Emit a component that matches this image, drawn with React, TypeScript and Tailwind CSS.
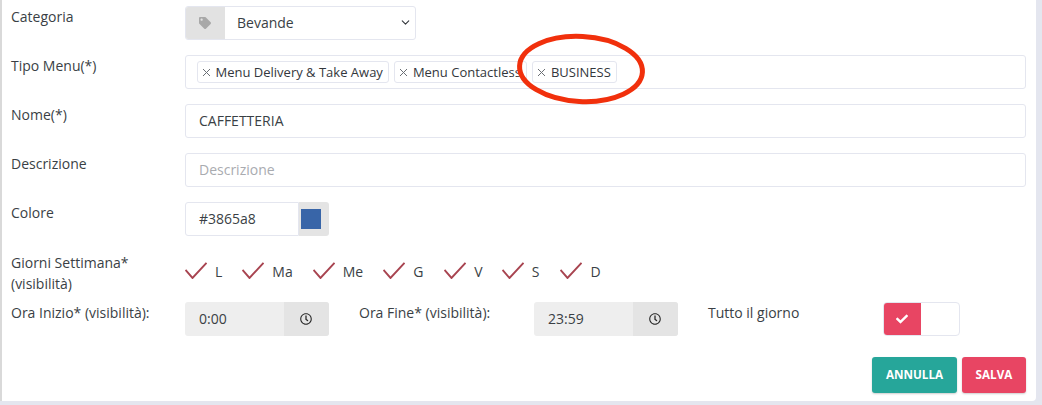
import { ChevronDown } from 'lucide-react';
import { FaCheck, FaRegClock, FaTag } from 'react-icons/fa';

const days = [
  { label: 'L', gap: 'mr-[20px]' },
  { label: 'Ma', gap: 'mr-[20px]' },
  { label: 'Me', gap: 'mr-[20px]' },
  { label: 'G', gap: 'mr-[21px]' },
  { label: 'V', gap: 'mr-[19px]' },
  { label: 'S', gap: 'mr-[21px]' },
  { label: 'D', gap: '' },
];

function Label({ children }: { children: React.ReactNode }) {
  return <div className="w-[174px] shrink-0 pt-px text-[14px] leading-5 text-[#3a3f45]">{children}</div>;
}

function Tag({ text }: { text: string }) {
  return (
    <span className="flex h-[22px] items-center gap-[4.5px] rounded-[3px] border border-[#e4e6ef] bg-white pl-[4px] pr-[5.5px] pt-px text-[13px] text-[#33373c]">
      <svg width="9" height="9" viewBox="0 0 9 9" stroke="#6b6f75" strokeWidth="1" fill="none">
        <path d="M1 1 L8 8 M8 1 L1 8" />
      </svg>
      {text}
    </span>
  );
}

function TimeBox({ value }: { value: string }) {
  return (
    <div className="flex h-[34px] w-[144px] shrink-0 overflow-hidden rounded-[3px] bg-[#eeeeee] text-[14px] text-[#3a3f45]">
      <div className="flex flex-1 items-center pb-px pl-[14px]">{value}</div>
      <div className="flex w-[45px] items-center justify-center bg-[#e4e4e4] pr-[2px]">
        <FaRegClock size={12} className="text-[#2b2b2b]" />
      </div>
    </div>
  );
}

export default function App() {
  return (
    <div className="h-[405px] w-[1042px] overflow-hidden bg-[#e4e6ef] font-['Open_Sans',sans-serif]">
      <div className="relative ml-[2px] h-[401px] w-[1034px] rounded-br-[4px] bg-white pl-[9px] pr-[10px] pt-[6px] shadow-[-2px_0_0_#d9d9d9]">
        <div className="mb-[15px] flex">
          <Label>Categoria</Label>
          <div className="flex h-[34px] w-[231px] overflow-hidden rounded-[3px] border border-[#e4e6ef]">
            <div className="-m-px flex w-[40px] items-center justify-center bg-[#e2e2e2]">
              <FaTag size={12} className="text-[#a8a8a8]" />
            </div>
            <div className="flex flex-1 items-center justify-between pb-px pl-[13px] pr-[3px] text-[14px] text-[#3a3f45]">
              Bevande
              <ChevronDown size={13} strokeWidth={2} className="text-[#33373c]" />
            </div>
          </div>
        </div>

        <div className="mb-[15px] flex">
          <Label>Tipo Menu(*)</Label>
          <div className="flex h-[34px] flex-1 items-center gap-[5px] rounded-[3px] border border-[#e4e6ef] pl-[11px]">
            <Tag text="Menu Delivery & Take Away" />
            <Tag text="Menu Contactless" />
            <Tag text="BUSINESS" />
          </div>
        </div>

        <div className="mb-[15px] flex">
          <Label>Nome(*)</Label>
          <div className="flex h-[34px] flex-1 items-center rounded-[3px] border border-[#e4e6ef] pb-px pl-[13px] text-[14px] text-[#3a3f45]">
            CAFFETTERIA
          </div>
        </div>

        <div className="mb-[15px] flex">
          <Label>Descrizione</Label>
          <div className="flex h-[34px] flex-1 items-center rounded-[3px] border border-[#e4e6ef] pb-px pl-[13px] text-[14px] text-[#a9abb0]">
            Descrizione
          </div>
        </div>

        <div className="mb-[15px] flex">
          <Label>Colore</Label>
          <div className="flex h-[34px] w-[144px]">
            <div className="flex w-[114px] items-center rounded-l-[3px] border border-[#e4e6ef] pb-px pl-[13px] text-[14px] text-[#3a3f45]">
              #3865a8
            </div>
            <div className="flex flex-1 items-center rounded-r-[3px] bg-[#e4e4e4] pl-[2px]">
              <div className="size-5 bg-[#3865a8]" />
            </div>
          </div>
        </div>

        <div className="mb-[9px] flex h-[42px]">
          <div className="w-[174px] shrink-0 pt-px text-[14px] leading-[21px] text-[#3a3f45]">
            Giorni Settimana*
            <br />
            (visibilità)
          </div>
          <div className="flex items-center pb-[2px] text-[14px] text-[#3a3f45]">
            {days.map((d) => (
              <div key={d.label} className={`flex items-center gap-[8px] ${d.gap}`}>
                <svg className="-mt-[2px]" width="22" height="17" viewBox="0 0 22 17" fill="none" stroke="#a84450" strokeWidth="1.9">
                  <path d="M0.5 8 L7.5 16 L21.5 0.8" />
                </svg>
                <span>{d.label}</span>
              </div>
            ))}
          </div>
        </div>

        <div className="mb-[21px] flex">
          <Label>Ora Inizio* (visibilità):</Label>
          <TimeBox value="0:00" />
          <div className="w-[205px] shrink-0 pl-[30px] pt-px text-[14px] leading-5 text-[#3a3f45]">Ora Fine* (visibilità):</div>
          <TimeBox value="23:59" />
          <div className="w-[205px] shrink-0 pl-[30px] pt-px text-[14px] leading-5 text-[#3a3f45]">Tutto il giorno</div>
          <div className="flex h-[34px] w-[77px] overflow-hidden rounded-[4px] border border-[#e4e6ef]">
            <div className="-m-px flex w-[38px] items-center justify-center bg-[#e84563]">
              <FaCheck size={12} className="text-white" />
            </div>
          </div>
        </div>

        <div className="flex justify-end gap-[5px]">
          <button className="h-9 w-[85px] rounded-[3px] bg-[#26a69a] text-[11.7px] font-bold text-white shadow-[0_1px_2px_rgba(0,0,0,0.2)]">
            ANNULLA
          </button>
          <button className="h-9 w-[64px] rounded-[3px] bg-[#e84563] text-[11.7px] font-bold text-white shadow-[0_1px_2px_rgba(0,0,0,0.2)]">
            SALVA
          </button>
        </div>

        {/* annotation drawn over the screenshot */}
        <svg className="absolute left-[511px] top-[30px]" width="136" height="78" viewBox="0 0 136 78" fill="none">
          <ellipse cx="68" cy="39" rx="61.5" ry="32.5" stroke="#f1300c" strokeWidth="5" transform="rotate(3 68 39)" />
        </svg>
      </div>
    </div>
  );
}
